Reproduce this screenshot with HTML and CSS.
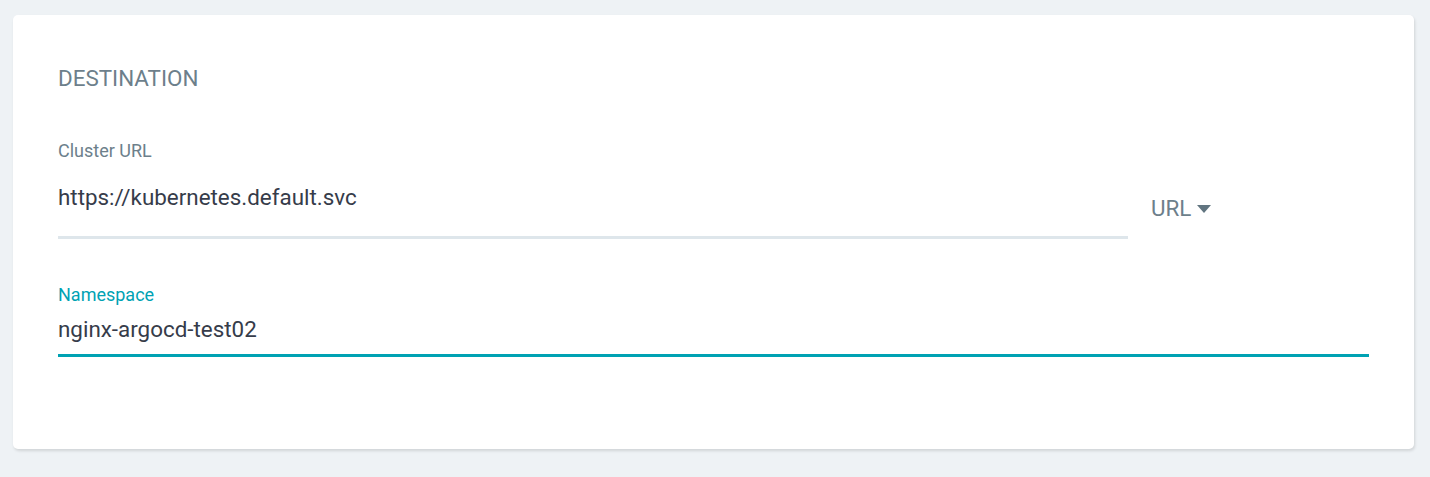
FILE: index.html
```html
<!DOCTYPE html>
<html>
<head>
<meta charset="utf-8">
<link rel="stylesheet" href="styles.css">
</head>
<body>
<div class="card">
  <div class="section-title">DESTINATION</div>
  <div class="row">
    <div class="field field--grow">
      <label class="field__label">Cluster URL</label>
      <div class="field__value">https://kubernetes.default.svc</div>
      <div class="field__line"></div>
    </div>
    <div class="dropdown">URL <span class="caret"></span></div>
  </div>
  <div class="field field--focus">
    <label class="field__label">Namespace</label>
    <div class="field__value">nginx-argocd-test02</div>
    <div class="field__line"></div>
  </div>
</div>
</body>
</html>
```
FILE: styles.css
```css
html, body {
  margin: 0;
  padding: 0;
  background: #eef2f5;
  font-family: Roboto, "Noto Sans", sans-serif;
}
body {
  padding: 15px 16px 28px 13px;
}
.card {
  background: #fff;
  border-radius: 5px;
  box-shadow: 1px 2px 3px rgba(0, 0, 0, 0.12);
  padding: 50px 45px 0 45px;
  height: 434px;
  box-sizing: border-box;
}
.section-title {
  font-size: 22.4px;
  color: #6d7f8b;
  line-height: 26px;
}
.row {
  display: flex;
  align-items: flex-start;
  margin-top: 49px;
}
.field {
  display: flex;
  flex-direction: column;
}
.field--grow {
  flex: 0 0 1070px;
}
.field__label {
  font-size: 18px;
  color: #6d7f8b;
  line-height: 22px;
}
.field__value {
  font-size: 22.4px;
  color: #363c4a;
  line-height: 28px;
  margin-top: 21px;
}
.field__line {
  height: 3px;
  background: #dee6eb;
  margin-top: 25px;
}
.dropdown {
  margin-left: 23px;
  margin-top: 54px;
  font-size: 22.4px;
  color: #6d7f8b;
  line-height: 28px;
  display: flex;
  align-items: center;
  gap: 6px;
}
.caret {
  width: 0;
  height: 0;
  border-left: 7px solid transparent;
  border-right: 7px solid transparent;
  border-top: 8px solid #617580;
  margin-top: 1px;
}
.field--focus {
  margin-top: 45px;
}
.field--focus .field__label {
  color: #00a2b3;
}
.field--focus .field__value {
  margin-top: 9px;
}
.field--focus .field__line {
  background: #00a2b3;
  margin-top: 11px;
}
```
